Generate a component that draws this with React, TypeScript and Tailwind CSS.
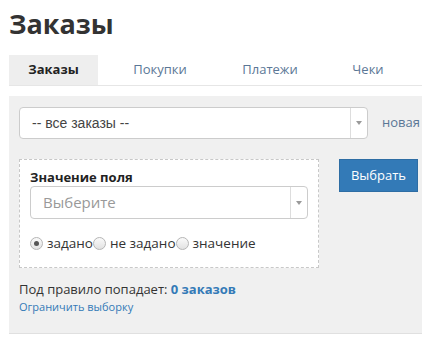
import React from "react";

const Arrow = () => (
  <svg width="8" height="6" viewBox="0 0 8 6"><path d="M1 1h6L4 5z" fill="#999" /></svg>
);

const Radio = ({ checked }: { checked?: boolean }) => (
  <span className="inline-flex w-[13px] h-[13px] rounded-full border border-[#b5b5b5] bg-gradient-to-b from-[#fafafa] to-[#e2e2e2] items-center justify-center shrink-0">
    {checked && <span className="w-[5px] h-[5px] rounded-full bg-[#555]" />}
  </span>
);

export default function App() {
  return (
    <div className="w-[422px] h-[343px] bg-white overflow-hidden text-[#333]" style={{ fontFamily: '"Open Sans", "Liberation Sans", sans-serif' }}>
      <h1 className="pl-[9px] pt-[4px] h-[55px] text-[27px] leading-[40px] font-bold text-[#333]">Заказы</h1>
      <div className="ml-[9px] flex h-[31px] border-b border-[#e6e6e6] text-[13px]">
        <div className="w-[89px] bg-[#eeeeee] flex items-center justify-center font-bold text-[#222]">Заказы</div>
        <div className="w-[124px] flex items-center justify-center text-[#5b7796]">Покупки</div>
        <div className="w-[96px] flex items-center justify-center text-[#5b7796]">Платежи</div>
        <div className="w-[100px] flex items-center justify-center text-[#5b7796]">Чеки</div>
      </div>
      <div className="ml-[9px] mt-[10px] h-[238px] bg-[#f0f0f0] border-b border-[#e0e0e0] pl-[10px] pt-[11px]">
        <div className="flex items-center">
          <div className="w-[349px] h-[32px] bg-white border border-[#cccccc] rounded-[4px] flex items-center">
            <span className="flex-1 pl-[12px] text-[14px] text-[#444]" style={{ fontFamily: '"Liberation Sans", sans-serif' }}>-- все заказы --</span>
            <span className="w-[17px] h-full border-l border-[#dddddd] flex items-center justify-center"><Arrow /></span>
          </div>
          <span className="ml-[14px] text-[13px] text-[#5b7796]">новая</span>
        </div>
        <div className="flex items-start mt-[20px]">
          <div className="w-[300px] h-[109px] bg-white border border-dashed border-[#c8c8c8] pl-[10px] pt-[9px]">
            <div className="text-[13px] font-bold leading-[17px] text-[#222]">Значение поля</div>
            <div className="w-[278px] h-[33px] bg-white border border-[#cccccc] rounded-[4px] flex items-center">
              <span className="flex-1 pl-[12px] text-[15px] text-[#999]">Выберите</span>
              <span className="w-[17px] h-full border-l border-[#dddddd] flex items-center justify-center"><Arrow /></span>
            </div>
            <div className="flex items-center mt-[14px] text-[13.5px] text-[#333]">
              <Radio checked />
              <span className="ml-[4px]">задано</span>
              <Radio />
              <span className="ml-[4px]">не задано</span>
              <Radio />
              <span className="ml-[4px]">значение</span>
            </div>
          </div>
          <button className="ml-[20px] w-[79px] h-[33px] bg-[#337ab7] border border-[#2e6da4] text-white text-[13px] flex items-center justify-center">Выбрать</button>
        </div>
        <div className="mt-[11px] text-[13px] leading-[20px] text-[#333]">Под правило попадает: <span className="font-bold text-[#337ab7]">0 заказов</span></div>
        <div className="text-[11px] leading-[15px] text-[#337ab7]">Ограничить выборку</div>
      </div>
    </div>
  );
}
